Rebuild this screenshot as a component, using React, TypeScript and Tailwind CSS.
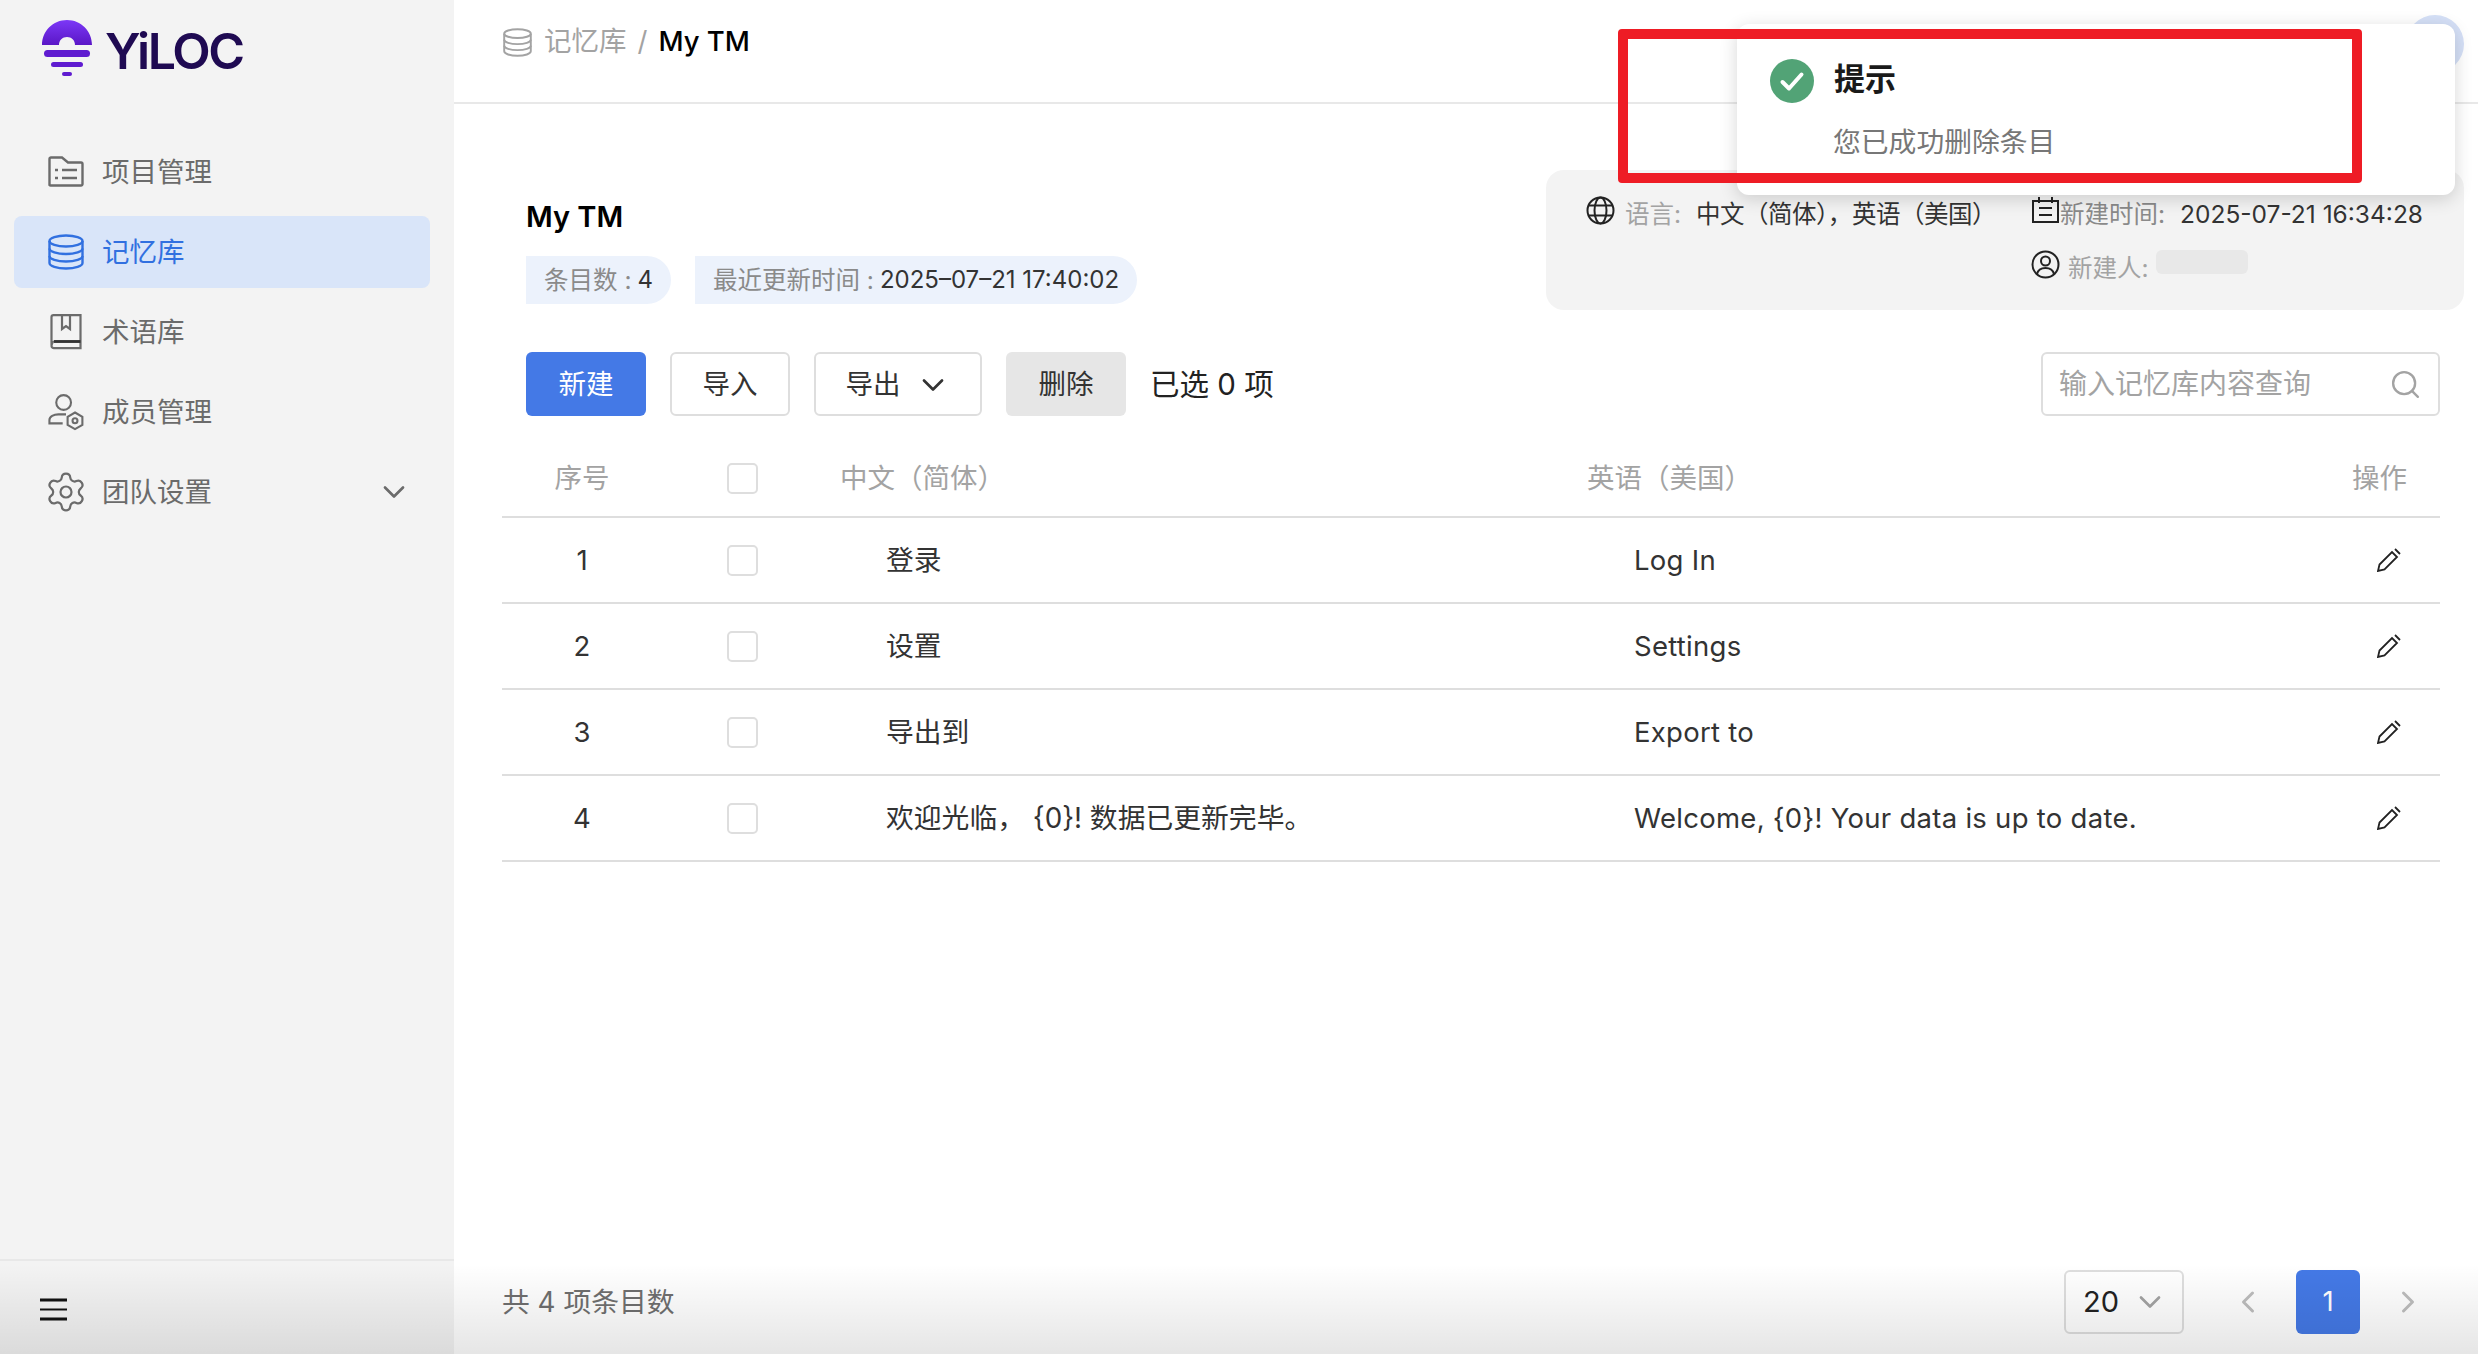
import { ChevronDown, ChevronLeft, ChevronRight, Search, Settings } from "lucide-react";

const ROWS = [
  { id: 1, zh: "登录", en: "Log In" },
  { id: 2, zh: "设置", en: "Settings" },
  { id: 3, zh: "导出到", en: "Export to" },
  { id: 4, zh: "欢迎光临， {0}! 数据已更新完毕。", en: "Welcome, {0}! Your data is up to date." },
];

const COLS = "grid grid-cols-[160px_160px_747px_1fr_120px] items-center";

function FolderIcon() {
  return (
    <svg width="36" height="32" viewBox="0 0 36 32" fill="none" stroke="currentColor" strokeWidth="2.4">
      <path d="M1.5 29V3a1.5 1.5 0 0 1 1.5-1.5h11l6 5h13a1.5 1.5 0 0 1 1.5 1.5v20a1.5 1.5 0 0 1-1.5 1.5H3A1.5 1.5 0 0 1 1.5 29z" />
      <path d="M7 14h3M14 14h15M7 22h3M14 22h15" />
    </svg>
  );
}

function DbIcon({ size = 36, w = 2.4 }: { size?: number; w?: number }) {
  return (
    <svg width={size} height={size} viewBox="0 0 36 36" fill="none" stroke="currentColor" strokeWidth={w}>
      <ellipse cx="18" cy="7" rx="16.5" ry="5.5" />
      <path d="M1.5 7v22c0 3 7.4 5.5 16.5 5.5S34.500 32 34.500 29V7" />
      <path d="M1.500 14.500c0 3 7.400 5.500 16.500 5.500s16.500-2.500 16.500-5.500M1.500 22c0 3 7.400 5.500 16.500 5.500S34.500 25 34.500 22" />
    </svg>
  );
}

function BookIcon() {
  return (
    <svg width="36" height="36" viewBox="0 0 36 36" fill="none" stroke="currentColor" strokeWidth="2.2">
      <path d="M3.500 31V3c0-1 .5-1.800 2-1.800h27v33H6c-1.500 0-2.500-1-2.500-2.200S4.500 27.500 6 27.500h26.500" />
      <path d="M6 27.500h26.500" stroke="#333" strokeWidth="2.800" />
      <path d="M14 1.500V15l4-3 4 3V1.500" />
    </svg>
  );
}

function MemberIcon() {
  return (
    <svg width="38" height="38" viewBox="0 0 38 38" fill="none" stroke="currentColor" strokeWidth="2.2">
      <circle cx="16.500" cy="9" r="7.800" />
      <path d="M19 21.500H11C6 21.500 1.500 24 1.500 27.500v3.500h14" />
      <path d="M28.500 20l7.800 4.500v8.500l-7.800 4.500-7.800-4.500v-8.500z" transform="translate(0 -.5)" />
      <circle cx="28.500" cy="28.200" r="2.600" />
    </svg>
  );
}

function GlobeIcon() {
  return (
    <svg width="29" height="29" viewBox="0 0 29 29" fill="none" stroke="#222" strokeWidth="2">
      <circle cx="14.500" cy="14.500" r="13" />
      <ellipse cx="14.500" cy="14.500" rx="6" ry="13" />
      <path d="M3 9.500h23M3 19.500h23" />
    </svg>
  );
}

function DateIcon() {
  return (
    <svg width="29" height="28" viewBox="0 0 29 28" fill="none" stroke="#222" strokeWidth="2">
      <path d="M2 5h25v21H2z" />
      <path d="M8 1v6M21 1v6M8 12h13M8 19h13" />
    </svg>
  );
}

function UserIcon() {
  return (
    <svg width="29" height="29" viewBox="0 0 29 29" fill="none" stroke="#222" strokeWidth="2">
      <circle cx="14.500" cy="14.500" r="13" />
      <circle cx="14.500" cy="11" r="4.500" />
      <path d="M6 24c1-4 4-6 8.500-6s7.500 2 8.500 6" />
    </svg>
  );
}

function PencilIcon() {
  return (
    <svg width="24" height="24" viewBox="0 0 24 24" fill="none" stroke="#222" strokeWidth="1.800">
      <path d="M1 23l1.500-6.500L15 4l5 5L7.500 21.500z" />
      <path d="M18 1l5 5" />
    </svg>
  );
}

function Logo() {
  return (
    <div className="flex items-start pl-[42px] pt-[20px] h-[136px]">
      <svg width="50" height="57" viewBox="0 0 50 57">
        <defs>
          <linearGradient id="logo-grad" x1="0" y1="0" x2="0" y2="1">
            <stop offset="0" stopColor="#7c38f7" />
            <stop offset="1" stopColor="#5a17c6" />
          </linearGradient>
        </defs>
        <path
          d="M0 25C0 11 11 0 25 0s25 11 25 25H33c0-5-3.500-8-8-8s-8 3-8 8z"
          fill="url(#logo-grad)"
        />
        <rect x="2" y="30" width="46" height="7" rx="3.500" fill="#5f1bd0" />
        <rect x="9" y="42" width="32" height="5" rx="2.500" fill="#5f1bd0" />
        <rect x="20" y="52" width="10" height="4" rx="2" fill="#5f1bd0" />
      </svg>
      <span className="ml-[13px] mt-[3px] text-[50px] leading-[56px] font-semibold tracking-[-0.048em] text-[#1f0a52]">
        YiLOC
      </span>
    </div>
  );
}

function NavItem({ icon, label, active, arrow }: { icon: React.ReactNode; label: string; active?: boolean; arrow?: boolean }) {
  return (
    <div
      className={
        active
          ? "flex items-center h-[72px] pl-[34px] pr-[18px] rounded-[8px] bg-[#d9e5f9] text-[#3170e0]"
          : "flex items-center h-[72px] pl-[34px] pr-[18px] rounded-[8px] text-[#6b6b6b]"
      }
    >
      <span className="w-[36px] flex justify-center">{icon}</span>
      <span className="ml-[18px] pt-[2px] text-[27.500px]">{label}</span>
      {arrow && <ChevronDown className="ml-auto" size={36} strokeWidth={1.800} />}
    </div>
  );
}

function Sidebar() {
  return (
    <aside className="w-[454px] shrink-0 flex flex-col bg-[#f3f3f3]">
      <Logo />
      <nav className="flex flex-col gap-[8px] pl-[14px] pr-[24px]">
        <NavItem icon={<FolderIcon />} label="项目管理" />
        <NavItem icon={<DbIcon />} label="记忆库" active />
        <NavItem icon={<BookIcon />} label="术语库" />
        <NavItem icon={<MemberIcon />} label="成员管理" />
        <NavItem icon={<Settings className="shrink-0" size={44} strokeWidth={1.200} />} label="团队设置" arrow />
      </nav>
      <div className="mt-auto h-[95px] border-t-[2px] border-[#e8e8e8] pl-[40px] pt-[37px]">
        <svg width="27" height="23" viewBox="0 0 27 23" stroke="#111" strokeWidth="3">
          <path d="M0 2h27M0 21h27" />
          <path d="M0 11.500h27" strokeWidth="2" />
        </svg>
      </div>
    </aside>
  );
}

function Header() {
  return (
    <header className="h-[104px] shrink-0 border-b-[2px] border-[#e8e8e8] flex justify-between pl-[49px] pr-[14px]">
      <div className="flex items-center h-[84px] text-[27.500px]">
        <span className="text-[#a3a3a3]">
          <DbIcon size={29} w={2.400} />
        </span>
        <span className="ml-[12px] text-[#a3a3a3]">记忆库</span>
        <span className="ml-[11px] text-[#a3a3a3]">/</span>
        <span className="ml-[11px] font-medium text-black">My TM</span>
      </div>
      <div className="mt-[15px] w-[58px] h-[58px] rounded-full bg-[#d5e0f7]" />
    </header>
  );
}

function InfoPanel() {
  return (
    <div className="w-[918px] h-[140px] rounded-[18px] bg-[#f3f3f3] flex pl-[40px] pt-[26px] text-[24.500px]">
      <div className="flex items-start h-[34px] w-[445px]">
        <GlobeIcon />
        <span className="ml-[10px] text-[#a3a3a3]">语言:</span>
        <span className="ml-[15px] text-[#333] tracking-[-0.02em]">中文（简体），英语（美国）</span>
      </div>
      <div className="flex flex-col gap-[20px]">
        <div className="flex items-start h-[34px]">
          <DateIcon />
          <span className="text-[#8a8a8a]">新建时间:</span>
          <span className="ml-[15px] text-[#333]">2025-07-21 16:34:28</span>
        </div>
        <div className="flex items-start h-[34px]">
          <UserIcon />
          <span className="ml-[8px] text-[#a3a3a3]">新建人:</span>
          <span className="ml-[7px] w-[92px] h-[24px] rounded-[6px] bg-[#e8e8e8]" />
        </div>
      </div>
    </div>
  );
}

function Pill({ children }: { children: React.ReactNode }) {
  return (
    <div className="h-[48px] flex items-center px-[18px] rounded-r-[24px] bg-[#ecf2fc] text-[24.500px] text-[#8a8a8a]">
      {children}
    </div>
  );
}

function Toolbar() {
  const btn = "h-[64px] flex items-center justify-center pt-[2px] rounded-[6px] text-[27.500px]";
  return (
    <div className="flex items-center mt-[42px] pl-[24px] gap-[24px]">
      <button className={`${btn} w-[120px] bg-[#4479e6] text-white`}>新建</button>
      <button className={`${btn} w-[120px] border-[2px] border-[#dedede] text-[#333]`}>导入</button>
      <button className={`${btn} w-[168px] gap-[14px] border-[2px] border-[#dedede] text-[#333]`}>
        导出
        <ChevronDown size={36} strokeWidth={1.800} />
      </button>
      <button className={`${btn} w-[120px] bg-[#e6e6e6] text-[#333]`}>删除</button>
      <span className="text-[29.500px] text-[#222]">已选 0 项</span>
      <div className="ml-auto w-[399px] h-[64px] flex items-center justify-between pl-[16px] pr-[16px] rounded-[6px] border-[2px] border-[#dedede] text-[28px] text-[#a3a3a3]">
        输入记忆库内容查询
        <Search size={33} strokeWidth={1.700} />
      </div>
    </div>
  );
}

function Box() {
  return <div className="w-[31px] h-[31px] rounded-[5px] border-[2px] border-[#dedede] bg-white" />;
}

function Table() {
  return (
    <div className="mt-[24px]">
      <div className={`${COLS} h-[78px] border-b-[2px] border-[#dedede] text-[27.500px] text-[#a3a3a3]`}>
        <div className="text-center pt-[2px]">序号</div>
        <div className="flex justify-center">
          <Box />
        </div>
        <div className="pl-[18px] pt-[2px]">中文（简体）</div>
        <div className="pl-[18px] pt-[2px]">英语（美国）</div>
        <div className="text-right pr-[33px] pt-[2px]">操作</div>
      </div>
      {ROWS.map((r) => (
        <div key={r.id} className={`${COLS} h-[86px] border-b-[2px] border-[#dedede] text-[27.500px] text-[#333]`}>
          <div className="text-center pt-[2px]">{r.id}</div>
          <div className="flex justify-center">
            <Box />
          </div>
          <div className="pl-[64px] pt-[2px] text-[27.800px]">{r.zh}</div>
          <div className="pl-[65px] pt-[2px] tracking-[0.01em]">{r.en}</div>
          <div className="flex justify-end pr-[39px]">
            <PencilIcon />
          </div>
        </div>
      ))}
    </div>
  );
}

function Footer() {
  return (
    <div className="mt-auto mb-[20px] flex items-center h-[64px]">
      <span className="pt-[2px] text-[27.800px] text-[#6f6f6f]">共 4 项条目数</span>
      <div className="ml-auto w-[120px] h-[64px] flex items-center justify-between pl-[17px] pr-[14px] rounded-[6px] border-[2px] border-[#dedede] text-[29px] text-[#222]">
        20
        <ChevronDown className="text-[#a3a3a3]" size={36} strokeWidth={1.800} />
      </div>
      <div className="ml-[32px] w-[64px] flex justify-center text-[#bdbdbd]">
        <ChevronLeft size={36} strokeWidth={2} />
      </div>
      <div className="ml-[16px] w-[64px] h-[64px] flex items-center justify-center rounded-[6px] bg-[#4479e6] text-[27.500px] text-white">
        1
      </div>
      <div className="ml-[16px] w-[64px] flex justify-center text-[#bdbdbd]">
        <ChevronRight size={36} strokeWidth={2} />
      </div>
    </div>
  );
}

export default function App() {
  return (
    <div className="relative flex w-full h-screen overflow-hidden bg-white font-['Inter','Noto_Sans_CJK_SC',sans-serif]">
      <Sidebar />
      <main className="flex-1 min-w-0 flex flex-col">
        <Header />
        <div className="flex-1 flex flex-col pl-[48px] pr-[38px]">
          <div className="flex justify-between pl-[24px] -mr-[24px] pt-[66px]">
            <div>
              <h1 className="mt-[27px] text-[29px] leading-[40px] font-semibold text-black">My TM</h1>
              <div className="mt-[19px] flex gap-[24px]">
                <Pill>
                  条目数 : <span className="ml-[6px] text-[#333] text-[24px]">4</span>
                </Pill>
                <Pill>
                  最近更新时间 : <span className="ml-[6px] text-[#333] text-[24px]">2025–07–21 17:40:02</span>
                </Pill>
              </div>
            </div>
            <InfoPanel />
          </div>
          <Toolbar />
          <Table />
          <Footer />
        </div>
      </main>

      {/* notification toast */}
      <div className="absolute left-[1737px] top-[24px] w-[718px] h-[171px] rounded-[12px] bg-white shadow-[0_4px_18px_rgba(0,0,0,0.16)] pl-[33px] pt-[32px]">
        <div className="flex items-center gap-[20px]">
          <svg width="44" height="44" viewBox="0 0 44 44">
            <circle cx="22" cy="22" r="22" fill="#52a376" />
            <path d="M12.500 23l6.500 6.500 12.500-14" fill="none" stroke="#fff" strokeWidth="4" strokeLinecap="round" strokeLinejoin="round" />
          </svg>
          <span className="pb-[3px] text-[31px] font-semibold text-[#1a1a1a]">提示</span>
        </div>
        <div className="mt-[16px] ml-[63px] text-[27.800px] text-[#777]">您已成功删除条目</div>
      </div>

      {/* annotation frame drawn on the screenshot */}
      <div className="absolute left-[1618px] top-[29px] w-[744px] h-[154px] rounded-[4px] border-[10px] border-[#ee1c25]" />

      {/* fade at the bottom of the window */}
      <div className="absolute left-0 right-0 bottom-0 h-[90px] pointer-events-none bg-gradient-to-b from-transparent to-black/10" />
    </div>
  );
}
